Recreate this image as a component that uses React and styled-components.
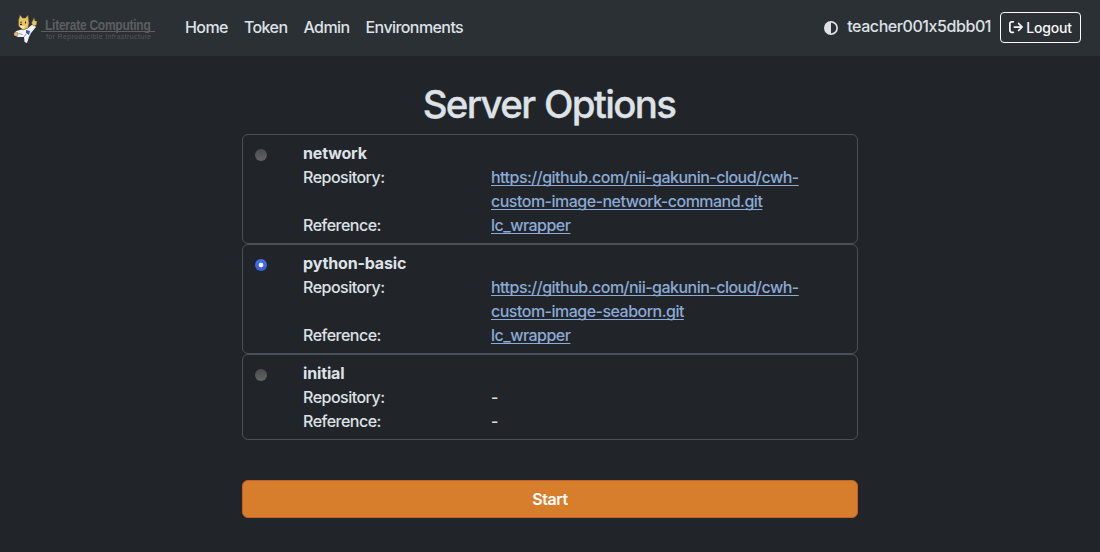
import React from "react";
import styled, { createGlobalStyle } from "styled-components";
import { FaArrowRightFromBracket, FaCircleHalfStroke } from "react-icons/fa6";

const GlobalStyle = createGlobalStyle`
  *, *::before, *::after { box-sizing: border-box; }
  body {
    margin: 0;
    background: #212529;
    color: #dee2e6;
    font: 500 16px/24px Inter, "Liberation Sans", sans-serif;
    letter-spacing: -0.51px;
    -webkit-font-smoothing: antialiased;
  }
`;

const Navbar = styled.nav`
  display: flex;
  align-items: center;
  height: 56px;
  padding: 0 19px 2px 12px;
  background: #2b3035;
`;

const Brand = styled.a`
  display: block;
  width: 144px;
  height: 36px;
  margin-right: 21px;
`;

const NavLinks = styled.div`
  display: flex;
  flex: 1;
  padding-left: 8px;
  gap: 16px;
`;

const NavLink = styled.a`
  color: #dee2e6;
  text-decoration: none;
  white-space: nowrap;
  letter-spacing: -0.58px;
`;

const Account = styled.div`
  display: flex;
  align-items: center;
`;

const ThemeIcon = styled(FaCircleHalfStroke)`
  display: block;
  width: 14px;
  height: 14px;
  margin: 1px 9px 0 0;
`;

const UserName = styled.span`
  margin-right: 9px;
  padding-bottom: 2px;
  letter-spacing: -0.43px;
`;

const LogoutButton = styled.button`
  display: flex;
  align-items: center;
  justify-content: center;
  gap: 3px;
  width: 81px;
  height: 31px;
  padding: 0;
  border: 1px solid #f8f9fa;
  border-radius: 4px;
  background: transparent;
  color: #f8f9fa;
  font: 500 14px/21px Inter, sans-serif;
  letter-spacing: -0.2px;
`;

const Main = styled.main`
  width: 616px;
  margin: 0 auto;
  padding-top: 24px;
`;

const Title = styled.h1`
  margin: 0 0 6px;
  padding-right: 2px;
  text-align: center;
  font-size: 38.5px;
  font-weight: 500;
  line-height: 48px;
  letter-spacing: -1.7px;
  word-spacing: 1px;
  -webkit-text-stroke: 0.3px currentColor;
`;

const Option = styled.label`
  display: flex;
  padding: 6px 12px;
  border: 1px solid #495057;
  border-radius: 6px;
`;

const Radio = styled.input`
  appearance: none;
  flex: none;
  width: 12px;
  height: 12px;
  margin: 8px 36px 0 0;
  border-radius: 50%;
  background: linear-gradient(#4b4c4e, #626365);

  &:checked {
    background: radial-gradient(circle, #f1f4fc 0 2px, transparent 2.7px),
      linear-gradient(#4470e8, #3860d4);
  }
`;

const Details = styled.div`
  flex: 1;
`;

const OptionName = styled.div`
  font-weight: 700;
  letter-spacing: -0.15px;
`;

const Field = styled.div`
  display: grid;
  grid-template-columns: 188px 1fr;
`;

const Link = styled.a`
  color: #8baad6;
  text-decoration: underline;
  text-decoration-thickness: 1px;
  text-underline-offset: 2px;
  text-decoration-skip-ink: none;
`;

const StartButton = styled.button`
  display: block;
  width: 100%;
  height: 38px;
  margin-top: 40px;
  border: 1px solid #c9602c;
  border-radius: 6px;
  background: #d67e2c;
  color: #fff;
  font: 600 16px/24px Inter, sans-serif;
  letter-spacing: -0.4px;
`;

const options = [
  {
    name: "network",
    repository: ["https://github.com/nii-gakunin-cloud/cwh-", "custom-image-network-command.git"],
    reference: "lc_wrapper",
  },
  {
    name: "python-basic",
    repository: ["https://github.com/nii-gakunin-cloud/cwh-", "custom-image-seaborn.git"],
    reference: "lc_wrapper",
    selected: true,
  },
  { name: "initial" },
];

const LogoSvg = styled.svg`
  display: block;
  overflow: visible;
  letter-spacing: 0;
`;

function Logo() {
  return (
    <LogoSvg width="144" height="36" viewBox="12 9 144 36" role="img" aria-label="Literate Computing">
      <path d="M20 30 L28 28 L33 24 L36 27 L31 33 L29 37 L27 43 L24.500 42 L24 37 L18 37 L14 35 L16 31Z" fill="#f1f2f5" />
      <path d="M26 30 L30 31 L29 35 L26 33Z" fill="#3657a4" />
      <path d="M18.500 20 L20 15 L22.500 18 L25.500 18 L28 15 L29 23 L28 28 L23 30 L18.500 26Z" fill="#e8c461" stroke="#524a37" strokeWidth=".5" />
      <path d="M31.500 23 L33 20 L34 17.500 L35 21 L37 21 L36.500 25 L33.500 26Z" fill="#e8c461" stroke="#524a37" strokeWidth=".4" />
      <circle cx="16" cy="34" r="2.100" fill="#e8c461" stroke="#524a37" strokeWidth=".4" />
      <path d="M20 26 L25 26 L24 28.500 L21 28Z" fill="#f3e7be" />
      <path d="M20.500 21.500h1v2h-1zM25 21.500h1v2h-1z" fill="#25272b" />
      <path d="M20 24.500h2" stroke="#28292c" />
      <path d="M18.500 33.500l4 1M24 37l2-3" stroke="#74777f" strokeWidth=".7" />
      <text transform="translate(45 30.300) scale(.86 1)" fill="#5d5e60" fontFamily="Liberation Sans, sans-serif" fontSize="14" fontWeight="700" textLength="123" lengthAdjust="spacing">Literate Computing</text>
      <path d="M41 31.500h114" stroke="#5d5e60" />
      <text x="46" y="39" fill="#57585a" fontFamily="Liberation Sans, sans-serif" fontSize="7" fontWeight="400" textLength="105" lengthAdjust="spacing">for Reproducible Infrastructure</text>
    </LogoSvg>
  );
}

function Value({ lines }) {
  if (!lines) return <span>-</span>;
  return (
    <Link>
      {lines.map((line, i) => (
        <React.Fragment key={line}>
          {i > 0 && <br />}
          {line}
        </React.Fragment>
      ))}
    </Link>
  );
}

export default function App() {
  return (
    <>
      <GlobalStyle />
      <Navbar>
        <Brand><Logo /></Brand>
        <NavLinks>
          <NavLink>Home</NavLink>
          <NavLink>Token</NavLink>
          <NavLink>Admin</NavLink>
          <NavLink>Environments</NavLink>
        </NavLinks>
        <Account>
          <ThemeIcon />
          <UserName>teacher001x5dbb01</UserName>
          <LogoutButton><FaArrowRightFromBracket size={14} />Logout</LogoutButton>
        </Account>
      </Navbar>
      <Main>
        <Title>Server Options</Title>
        {options.map((o) => (
          <Option key={o.name}>
            <Radio type="radio" name="server" defaultChecked={o.selected} />
            <Details>
              <OptionName>{o.name}</OptionName>
              <Field><span>Repository:</span><Value lines={o.repository} /></Field>
              <Field><span>Reference:</span><Value lines={o.reference && [o.reference]} /></Field>
            </Details>
          </Option>
        ))}
        <StartButton>Start</StartButton>
      </Main>
    </>
  );
}
